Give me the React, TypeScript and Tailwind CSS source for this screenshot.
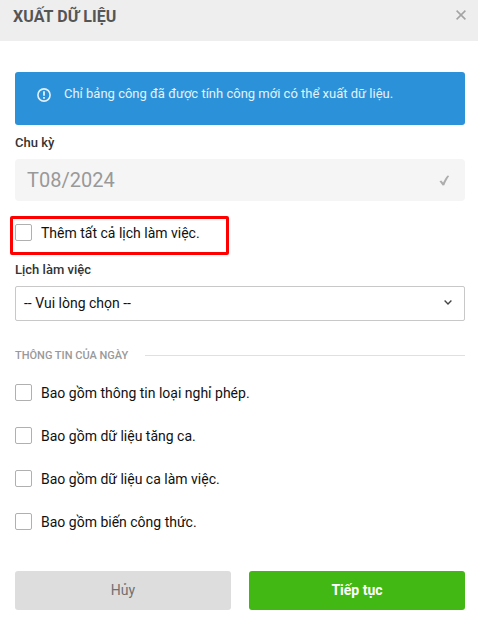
import React, { useState } from 'react';

const dayOptions = [
  'Bao gồm thông tin loại nghỉ phép.',
  'Bao gồm dữ liệu tăng ca.',
  'Bao gồm dữ liệu ca làm việc.',
  'Bao gồm biến công thức.',
];

type CheckOptionProps = {
  label: string;
};

const CheckOption: React.FC<CheckOptionProps> = ({ label }) => {
  const [checked, setChecked] = useState(false);

  return (
    <label className="flex h-[17px] cursor-pointer items-center gap-[9px] whitespace-nowrap text-sm text-[#111]">
      <input
        type="checkbox"
        checked={checked}
        onChange={() => setChecked(!checked)}
        className="size-[17px] shrink-0 appearance-none rounded-[2px] border border-[#b0b0b0] bg-white checked:bg-[#2b91d8]"
      />
      <span className="pt-[2px] leading-[17px]">{label}</span>
    </label>
  );
};

export const ExportDialog: React.FC = () => {
  return (
    <div className="h-[627px] w-[478px] overflow-hidden bg-white font-[Roboto,'Noto_Sans',sans-serif]">
      {/* Header */}
      <div className="flex h-[41px] justify-between bg-[#eee] pl-[13px] pr-[12px]">
        <h1 className="mt-[7px] text-base leading-5 font-bold tracking-[0.08px] text-[#555]">XUẤT DỮ LIỆU</h1>
        <button type="button" aria-label="Đóng" className="mt-[10px] size-[10px]">
          <svg viewBox="0 0 10 10" className="size-[10px]" fill="none" stroke="#a3a3a3" strokeWidth="1.5">
            <path d="M0.6 0.6 9.4 9.4M9.4 0.6 0.6 9.4" />
          </svg>
        </button>
      </div>

      <div className="pt-[31px] pr-[13px] pl-[15px]">
        {/* Notice */}
        <div className="flex h-[53px] gap-[13px] rounded-[3px] bg-[#2b91d8] pl-[22px] text-[13px] text-[#e3f1fb]">
          <svg viewBox="0 0 14 14" className="mt-[16px] size-[14px]" fill="none" stroke="currentColor">
            <circle cx="7" cy="7" r="6.1" strokeWidth="1.6" />
            <path d="M7 3.2V7.7M7 9V10.8" strokeWidth="1.8" />
          </svg>
          <p className="mt-[13px] leading-[18px]">Chỉ bảng công đã được tính công mới có thể xuất dữ liệu.</p>
        </div>

        {/* Period */}
        <div className="mt-[9px] mb-[7px] text-[13px] leading-[18px] font-medium text-[#333]">Chu kỳ</div>
        <div className="flex h-[42px] items-center justify-between rounded-[4px] bg-[#f5f5f5] pr-[15px] pl-3">
          <span className="text-xl text-[#999]">T08/2024</span>
          <svg viewBox="0 0 11 11" className="size-[11px]" fill="#adadad">
            <path d="M0.5 6.3 2.2 5.6 4.1 7.6C5.4 4.7 6.7 2.4 8.6 0.4L10.2 0.9C8.1 3.8 6.7 6.8 5.3 10.3L3.6 10.5Z" />
          </svg>
        </div>

        {/* Highlighted option */}
        <div className="mt-[15px] -ml-[5px] h-[39px] w-[219px] rounded-[2px] border-[3px] border-[#f00] pt-[5px] pl-[2px]">
          <CheckOption label="Thêm tất cả lịch làm việc." />
        </div>

        {/* Schedule */}
        <div className="mt-[6px] mb-[7px] text-[13px] leading-[18px] font-medium text-[#333]">Lịch làm việc</div>
        <button
          type="button"
          className="flex h-[35px] w-full items-center justify-between rounded-[2px] border border-[#c8c8c8] pr-[12px] pl-2 text-sm text-[#111]"
        >
          <span className="pb-[2px]">-- Vui lòng chọn --</span>
          <svg viewBox="0 0 8 5" className="mb-[2px] h-[5px] w-[8px]" fill="none" stroke="#444" strokeWidth="1.4">
            <path d="M0.6 0.6 4 3.9 7.4 0.6" />
          </svg>
        </button>

        {/* Day information */}
        <div className="mt-[25px] flex h-[18px] items-center gap-[17px]">
          <h2 className="pt-[2px] text-[11px] font-medium whitespace-nowrap text-[#999]">THÔNG TIN CỦA NGÀY</h2>
          <div className="h-px flex-1 bg-[#e0e0e0]" />
        </div>
        <div className="mt-[20px] flex flex-col gap-[26px]">
          {dayOptions.map((option) => (
            <CheckOption key={option} label={option} />
          ))}
        </div>

        {/* Actions */}
        <div className="mt-[41px] grid grid-cols-2 gap-[18px] text-sm">
          <button type="button" className="h-[39px] rounded-[3px] bg-[#ddd] pb-[2px] text-[#707070]">
            Hủy
          </button>
          <button type="button" className="h-[39px] rounded-[3px] bg-[#42b814] pb-[2px] font-bold text-white">
            Tiếp tục
          </button>
        </div>
      </div>
    </div>
  );
};

export default ExportDialog;
